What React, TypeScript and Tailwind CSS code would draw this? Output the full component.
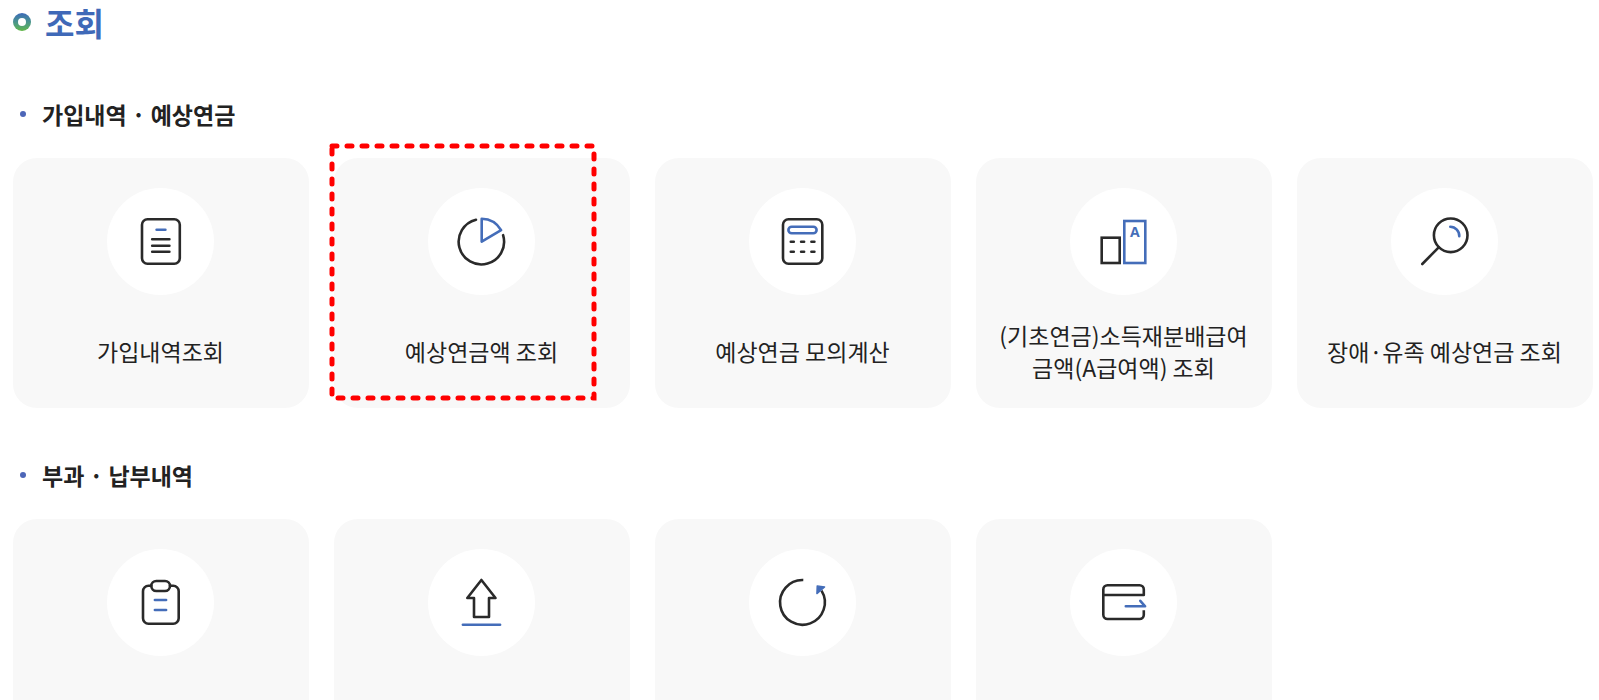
import type { ReactNode } from 'react'

type Item = {
  id: string
  label?: string
  lines?: string[]
  icon: ReactNode
  marked?: boolean
}

const INK = '#2a2a2a'
const BLUE = '#446db9'

// Every icon is drawn on the 107px white disc it sits on
function Disc({ children }: { children: ReactNode }) {
  return (
    <span className="block size-[107px] shrink-0 rounded-full bg-white">
      <svg
        viewBox="0 0 107 107"
        className="size-full"
        fill="none"
        stroke={INK}
        strokeWidth="2.6"
        strokeLinecap="round"
        strokeLinejoin="round"
        aria-hidden="true"
      >
        {children}
      </svg>
    </span>
  )
}

const historyItems: Item[] = [
  {
    id: 'join',
    lines: ['가입내역조회'],
    icon: (
      <>
        <rect x="35" y="31.3" width="37.8" height="44.4" rx="5.5" />
        <path d="M49.6 41.7H58.4" stroke={BLUE} />
        <path d="M45.2 51.3H62.4M45.2 57.7H62.4M45.2 63.7H62.4" />
      </>
    ),
  },
  {
    id: 'expected',
    lines: ['예상연금액 조회'],
    marked: true,
    icon: (
      <>
        <path d="M48 31.7A22.7 22.7 0 1 0 75.1 47.2" />
        <path d="M53.7 53.7V30.8A23 23 0 0 1 73.1 42.2Z" stroke={BLUE} />
      </>
    ),
  },
  {
    id: 'simulate',
    lines: ['예상연금 모의계산'],
    icon: (
      <>
        <rect x="34" y="31.3" width="39.3" height="44.4" rx="5.5" />
        <rect x="39.4" y="38.7" width="28.2" height="6.6" rx="3.3" stroke={BLUE} />
        <path d="M41.8 53.7H44.8M52.1 53.7H55.1M62.4 53.7H65.4M41.8 63.7H44.8M52.1 63.7H55.1M62.4 63.7H65.4" />
      </>
    ),
  },
  {
    id: 'basic',
    lines: ['(기초연금)소득재분배급여', '금액(A급여액) 조회'],
    icon: (
      <>
        <rect x="31.7" y="49.7" width="18" height="25.3" strokeLinejoin="miter" />
        <rect x="54.3" y="33" width="21" height="42" stroke={BLUE} strokeLinejoin="miter" />
        <text
          x="64.9"
          y="49.3"
          textAnchor="middle"
          fill={BLUE}
          stroke="none"
          className="font-['Open_Sans',sans-serif] text-[14px] font-bold"
        >
          A
        </text>
      </>
    ),
  },
  {
    id: 'disability',
    lines: ['장애·유족 예상연금 조회'],
    icon: (
      <>
        <circle cx="59.7" cy="47.3" r="16.8" />
        <path d="M47.7 59.3L31.3 76" />
        <path d="M59.3 38.7A9.2 9.2 0 0 1 68.3 48.3" stroke={BLUE} />
      </>
    ),
  },
]

const paymentItems: Item[] = [
  {
    id: 'charge',
    label: '부과내역',
    icon: (
      <>
        <path d="M44.3 36.7H41.5A5.5 5.5 0 0 0 36 42.2V69.2A5.5 5.5 0 0 0 41.5 74.7H66.2A5.5 5.5 0 0 0 71.7 69.2V42.2A5.5 5.5 0 0 0 66.2 36.7H63" />
        <rect x="44.3" y="32" width="18.7" height="10" rx="5" />
        <path d="M47.9 51H59.1M47.9 61H59.1" stroke={BLUE} />
      </>
    ),
  },
  {
    id: 'pay',
    label: '납부내역',
    icon: (
      <>
        <path d="M53.4 31L67.5 49H61V68H46V49H39.3Z" />
        <path d="M34.9 75.7H72.1" stroke={BLUE} />
      </>
    ),
  },
  {
    id: 'refund',
    label: '반환내역',
    icon: (
      <>
        <path d="M54.3 31A22.4 22.4 0 1 0 72.5 41.6" strokeLinecap="butt" />
        <path d="M68.2 36.9L75.6 38L67.9 44.6Z" fill={BLUE} stroke={BLUE} strokeWidth="1.4" />
      </>
    ),
  },
  {
    id: 'transfer',
    label: '자동이체내역',
    icon: (
      <>
        <path
          d="M33.3 46H73.8V40.5A4.2 4.2 0 0 0 69.6 36.3H37.5A4.2 4.2 0 0 0 33.3 40.5V65.8A4.2 4.2 0 0 0 37.5 70H69.6A4.2 4.2 0 0 0 73.8 65.8V61.3"
          strokeLinecap="butt"
        />
        <path d="M55.8 57.3H75.1L70.3 51.8" stroke={BLUE} />
      </>
    ),
  },
]

function Card({ item }: { item: Item }) {
  return (
    <li className="relative">
      <a
        href="#"
        aria-label={item.label}
        className="flex min-h-[250px] flex-col items-center rounded-3xl bg-[#f8f8f8] pt-[30px] pr-px pb-0.5"
      >
        <Disc>{item.icon}</Disc>
        <span className="flex flex-1 flex-col justify-center text-center text-[23px] leading-8 whitespace-nowrap">
          {item.lines?.map((line) => (
            <span key={line} className="block">
              {line}
            </span>
          ))}
        </span>
      </a>
      {item.marked && (
        <svg
          viewBox="0 0 270 260"
          className="pointer-events-none absolute -top-4 -left-1.5 h-[260px] w-[270px]"
          aria-hidden="true"
        >
          <path
            d="M4 4H266V256H4Z"
            fill="none"
            stroke="#ff0000"
            strokeWidth="5"
            strokeLinecap="round"
            strokeDasharray="5 10"
          />
        </svg>
      )}
    </li>
  )
}

function Section({ title, items }: { title: string; items: Item[] }) {
  return (
    <section>
      <h2 className="flex items-center gap-4 pl-[7px] text-[23px] leading-8 font-bold">
        <span className="size-1.5 rounded-full bg-[#4d66b8]" />
        {title}
      </h2>
      <ul className="mt-7 grid grid-cols-5 gap-[25px]">
        {items.map((item) => (
          <Card key={item.id} item={item} />
        ))}
      </ul>
    </section>
  )
}

export default function App() {
  return (
    <main className="h-screen overflow-hidden bg-white pr-1.5 pl-[13px] font-['Noto_Sans_CJK_KR',sans-serif] text-[#222222]">
      {/* Page title */}
      <h1 className="flex items-center gap-3.5 text-[32px] leading-[44px] font-bold text-[#3f69b8]">
        <span className="flex size-[18px] items-center justify-center rounded-full bg-linear-to-b from-[#3f69b8] to-[#62b743]">
          <span className="size-2 rounded-full bg-white" />
        </span>
        조회
      </h1>

      {/* Menu groups */}
      <div className="mt-[54px] flex flex-col gap-[51px]">
        <Section title="가입내역 · 예상연금" items={historyItems} />
        <Section title="부과 · 납부내역" items={paymentItems} />
      </div>
    </main>
  )
}
